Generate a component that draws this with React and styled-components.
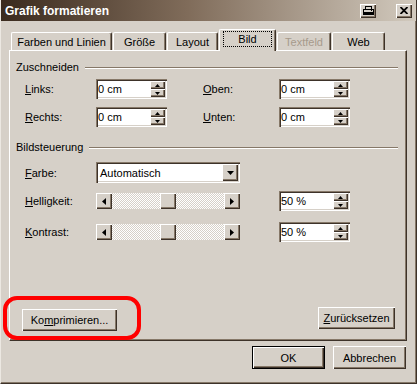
import React from 'react';
import styled, { createGlobalStyle } from 'styled-components';

const face = '#d6d0c8';
const shadow = '#867868';
const dark = '#3d3229';

const GlobalStyle = createGlobalStyle`
  html, body { margin: 0; padding: 0; background: ${face}; }
  body {
    font-family: "Liberation Sans", Arial, sans-serif;
    font-size: 11px;
    color: #000;
  }
  * { box-sizing: border-box; }
`;

const raised = `
  box-shadow: inset 1px 1px #fff, inset -1px -1px ${dark}, inset -2px -2px ${shadow};
`;

const sunken = `
  box-shadow: inset 1px 1px ${shadow}, inset 2px 2px ${dark}, inset -1px -1px #fff, inset -2px -2px ${face};
`;

const Window = styled.div`
  width: 417px;
  height: 384px;
  background: ${face};
  display: flex;
  flex-direction: column;
  border-left: 1px solid #ece8e2;
  border-right: 1px solid ${dark};
  border-bottom: 1px solid ${dark};
  box-shadow: inset -1px -1px ${shadow};
`;

const TitleBar = styled.div`
  height: 21px;
  flex: none;
  display: flex;
  align-items: center;
  padding: 0 4px 0 4px;
  background: linear-gradient(to right, #3a2a1e 0%, #806c5a 45%, #d2cabe 100%);
`;

const Title = styled.div`
  color: #fff;
  font-weight: bold;
  font-size: 12px;
`;

const TitleButtons = styled.div`
  margin-left: auto;
  display: flex;
  gap: 20px;
`;

const TitleButton = styled.div`
  width: 16px;
  height: 14px;
  background: ${face};
  ${raised}
  display: flex;
  align-items: center;
  justify-content: center;
`;

const Body = styled.div`
  flex: 1;
  display: flex;
  flex-direction: column;
  padding: 8px 9px 0 8px;
`;

const TabStrip = styled.div`
  height: 21px;
  display: flex;
  align-items: flex-end;
  gap: 1px;
  padding-left: 2px;
`;

const Tab = styled.div`
  width: ${p => p.$w}px;
  height: ${p => (p.$active ? 22 : 18)}px;
  margin-bottom: ${p => (p.$active ? -1 : 0)}px;
  position: relative;
  z-index: ${p => (p.$active ? 1 : 0)};
  background: ${face};
  border-top: 1px solid #fff;
  border-left: 1px solid #fff;
  border-right: 1px solid ${dark};
  border-radius: 2px 2px 0 0;
  box-shadow: inset -1px 0 ${shadow};
  display: flex;
  align-items: center;
  justify-content: center;
  padding: ${p => (p.$active ? '0 0 3px' : '1px 0 0')};
  color: ${p => (p.$disabled ? '#a69a8c' : '#000')};
  white-space: nowrap;
`;

const Focus = styled.span`
  border: 1px dotted #000;
  padding: 0 14px;
  line-height: 14px;
`;

const Panel = styled.div`
  height: 291px;
  flex: none;
  border-top: 1px solid #fff;
  border-left: 1px solid #fff;
  border-right: 1px solid ${dark};
  border-bottom: 1px solid ${dark};
  box-shadow: inset -1px -1px ${shadow};
  display: flex;
  flex-direction: column;
  padding: 10px 8px 9px 6px;
`;

const SectionHead = styled.div`
  display: flex;
  align-items: center;
  height: 13px;
  line-height: 13px;
  margin-top: ${p => p.$mt || 0}px;
`;

const Rule = styled.div`
  flex: 1;
  margin-left: 6px;
  border-top: 1px solid ${shadow};
  border-bottom: 1px solid #fff;
`;

const Row = styled.div`
  display: flex;
  align-items: center;
  height: ${p => p.$h}px;
  margin-top: ${p => p.$mt}px;
  margin-left: 9px;
`;

const Label = styled.div`
  width: ${p => p.$w}px;
  flex: none;
  white-space: nowrap;
`;

const Spacer = styled.div`
  width: ${p => p.$w}px;
  flex: none;
`;

const Field = styled.div`
  width: ${p => p.$w}px;
  height: ${p => p.$h}px;
  flex: none;
  background: #fff;
  ${sunken}
  display: flex;
  align-items: center;
  padding: 2px;
`;

const FieldText = styled.div`
  flex: 1;
  padding-left: ${p => p.$pl}px;
  white-space: nowrap;
`;

const SpinCol = styled.div`
  width: 15px;
  height: 16px;
  display: flex;
  flex-direction: column;
`;

const SmallBtn = styled.div`
  flex: 1;
  background: ${face};
  ${raised}
  display: flex;
  align-items: center;
  justify-content: center;
`;

const DropBtn = styled.div`
  width: 16px;
  height: 17px;
  background: ${face};
  ${raised}
  display: flex;
  align-items: center;
  justify-content: center;
`;

const Slider = styled.div`
  width: 144px;
  height: 16px;
  display: flex;
`;

const ScrollBtn = styled.div`
  width: 16px;
  height: 16px;
  flex: none;
  background: ${face};
  ${raised}
  display: flex;
  align-items: center;
  justify-content: center;
`;

const Track = styled.div`
  flex: 1;
  display: flex;
  background: repeating-conic-gradient(#fff 0 25%, ${face} 0 50%) 0 0 / 2px 2px;
`;

const Thumb = styled.div`
  width: 16px;
  height: 16px;
  background: ${face};
  ${raised}
`;

const BottomRow = styled.div`
  margin-top: auto;
  display: flex;
  justify-content: space-between;
  align-items: flex-start;
  padding: 0 3px 0 6px;
`;

const Highlight = styled.div`
  position: relative;
  margin-top: 2px;
  &::after {
    content: '';
    position: absolute;
    top: -13px;
    left: -19px;
    right: -24px;
    bottom: -9px;
    border: 4px solid #ff0000;
    border-radius: 14px;
    pointer-events: none;
  }
`;

const Button = styled.div`
  width: ${p => p.$w}px;
  height: ${p => p.$h}px;
  background: ${face};
  border: ${p => (p.$default ? '1px solid #000' : 'none')};
  ${raised}
  display: flex;
  align-items: center;
  justify-content: center;
  white-space: nowrap;
`;

const Footer = styled.div`
  display: flex;
  justify-content: flex-end;
  gap: 8px;
  margin: 5px 1px 0 0;
`;

function Arrow({ dir, w, h }) {
  const pts = {
    up: `0,${h} ${w},${h} ${w / 2},0`,
    down: `0,0 ${w},0 ${w / 2},${h}`,
    left: `${w},0 ${w},${h} 0,${h / 2}`,
    right: `0,0 0,${h} ${w},${h / 2}`,
  }[dir];
  return (
    <svg width={w} height={h} viewBox={`0 0 ${w} ${h}`}>
      <polygon points={pts} fill="#000" />
    </svg>
  );
}

function SpinBox({ value }) {
  return (
    <Field $w={71} $h={20}>
      <FieldText $pl={0}>{value}</FieldText>
      <SpinCol>
        <SmallBtn><Arrow dir="up" w={5} h={3} /></SmallBtn>
        <SmallBtn><Arrow dir="down" w={5} h={3} /></SmallBtn>
      </SpinCol>
    </Field>
  );
}

function TrackBar({ value }) {
  const pos = Math.round((112 - 16) * value / 100);
  return (
    <Slider>
      <ScrollBtn><Arrow dir="left" w={4} h={7} /></ScrollBtn>
      <Track>
        <Thumb style={{ marginLeft: pos }} />
      </Track>
      <ScrollBtn><Arrow dir="right" w={4} h={7} /></ScrollBtn>
    </Slider>
  );
}

const tabs = [
  { label: 'Farben und Linien', w: 101 },
  { label: 'Größe', w: 53 },
  { label: 'Layout', w: 51 },
  { label: 'Bild', w: 57, active: true },
  { label: 'Textfeld', w: 54, disabled: true },
  { label: 'Web', w: 53 },
];

export default function App() {
  return (
    <>
      <GlobalStyle />
      <Window>
        <TitleBar>
          <Title>Grafik formatieren</Title>
          <TitleButtons>
            <TitleButton>
              <svg width="11" height="9" viewBox="0 0 11 9">
                <rect x="2.5" y="0.5" width="6" height="3" fill="none" stroke="#000" />
                <rect x="0.5" y="3.5" width="10" height="5" fill="none" stroke="#000" />
                <rect x="0" y="6" width="11" height="3" fill="#000" />
                <rect x="8" y="4" width="1" height="1" fill="#000" />
              </svg>
            </TitleButton>
            <TitleButton>
              <svg width="8" height="7" viewBox="0 0 8 7">
                <path d="M0.5 0 L7.5 7 M7.5 0 L0.5 7" stroke="#000" strokeWidth="1.8" />
              </svg>
            </TitleButton>
          </TitleButtons>
        </TitleBar>
        <Body>
          <TabStrip>
            {tabs.map(t => (
              <Tab key={t.label} $w={t.w} $active={t.active} $disabled={t.disabled}>
                {t.active ? <Focus>{t.label}</Focus> : t.label}
              </Tab>
            ))}
          </TabStrip>
          <Panel>
            <SectionHead>
              Zuschneiden
              <Rule />
            </SectionHead>
            <Row $h={20} $mt={5}>
              <Label $w={71}><u>L</u>inks:</Label>
              <SpinBox value="0 cm" />
              <Spacer $w={36} />
              <Label $w={76}><u>O</u>ben:</Label>
              <SpinBox value="0 cm" />
            </Row>
            <Row $h={20} $mt={8}>
              <Label $w={71}><u>R</u>echts:</Label>
              <SpinBox value="0 cm" />
              <Spacer $w={36} />
              <Label $w={76}><u>U</u>nten:</Label>
              <SpinBox value="0 cm" />
            </Row>

            <SectionHead $mt={14}>
              Bildsteuerung
              <Rule />
            </SectionHead>
            <Row $h={21} $mt={8}>
              <Label $w={71}><u>F</u>arbe:</Label>
              <Field $w={144} $h={21}>
                <FieldText $pl={2}>Automatisch</FieldText>
                <DropBtn><Arrow dir="down" w={7} h={4} /></DropBtn>
              </Field>
            </Row>
            <Row $h={20} $mt={8}>
              <Label $w={71}><u>H</u>elligkeit:</Label>
              <TrackBar value={50} />
              <Spacer $w={39} />
              <SpinBox value="50 %" />
            </Row>
            <Row $h={20} $mt={11}>
              <Label $w={71}><u>K</u>ontrast:</Label>
              <TrackBar value={50} />
              <Spacer $w={39} />
              <SpinBox value="50 %" />
            </Row>

            <BottomRow>
              <Highlight>
                <Button $w={95} $h={22}>Ko<u>m</u>primieren...</Button>
              </Highlight>
              <Button $w={77} $h={22}><u>Z</u>urücksetzen</Button>
            </BottomRow>
          </Panel>
          <Footer>
            <Button $w={73} $h={23} $default>OK</Button>
            <Button $w={73} $h={23}>Abbrechen</Button>
          </Footer>
        </Body>
      </Window>
    </>
  );
}
